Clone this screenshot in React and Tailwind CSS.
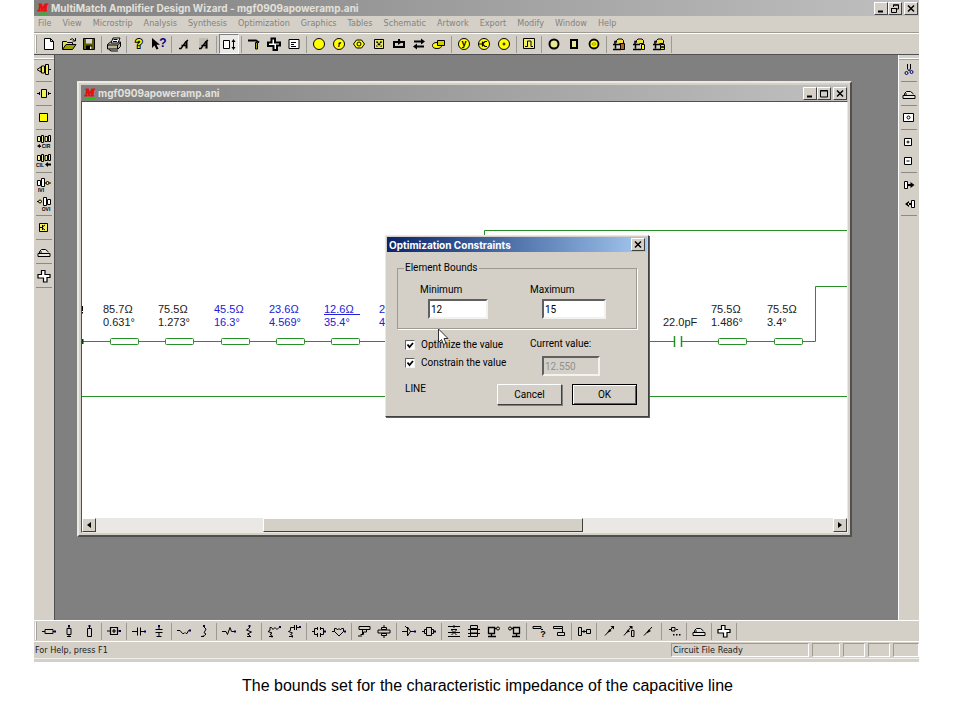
import { useState } from 'react';
import clsx from 'clsx';

const raised = 'border border-t-white border-l-white border-b-[#404040] border-r-[#404040] bg-[#d4d0c8]';
const sunken = 'border-2 border-t-[#606060] border-l-[#606060] border-b-[#f4f2ee] border-r-[#f4f2ee]';
const uiFont = "font-['DejaVu_Sans_Condensed','DejaVu_Sans',sans-serif]";
const titleFont = "font-[Inter,'DejaVu_Sans_Condensed',sans-serif] text-[10px] font-bold";

const menus = [
  'File', 'View', 'Microstrip', 'Analysis', 'Synthesis', 'Optimization', 'Graphics',
  'Tables', 'Schematic', 'Artwork', 'Export', 'Modify', 'Window', 'Help',
];

const YELLOW = '#ffff00';

const Glyph = ({ x = 10, y, size, children, ...rest }) => (
  <text x={x} y={y} fontSize={size} textAnchor="middle" stroke="none" fill="#000" fontWeight="bold" {...rest}>
    {children}
  </text>
);

const Disc = ({ children }) => (
  <>
    <circle cx="10" cy="10" r="5.5" fill={YELLOW} />
    {children}
  </>
);

const Board = ({ children }) => (
  <>
    <path d="M7.500 8.500v-2l1.500-1.500h4l1.500 1.500v3h-4" fill="#f0e040" />
    <path d="M4 10.500h7M6.500 10.500v4M4 15.500h8M8 7.500h-2v3" strokeWidth="1.500" />
    {children}
  </>
);

const crossPath = 'M7.500 4.500h3.500v4h5v3h-3v4.500h-3.500v-4h-5.500v-3.500h3.500z';
const bump = <path d="M4 14.500h12v-3h-12zM5.500 11v-1.500l2-2h4l3 2.500M6 10h2" fill="#e8e6e0" />;
const cross = <path d={crossPath} fill="#fff" strokeWidth="1.200" />;
const annotate = (
  <>
    <path d="M5 14.500h2l5-7M7.500 11.500h5M12 7.500l2-1.500" strokeWidth="1.300" />
    <path d="M12.500 7v7.500" strokeWidth="2" />
  </>
);

/* Main toolbar, grouped between separators */
const mainTools = [
  [
    { name: 'New', art: <path d="M5.500 4.500h6l3 3v8h-9zM11.500 4.500v3h3" fill="#fff" /> },
    {
      name: 'Open',
      art: (
        <>
          <path d="M3.500 15v-7.500h4l1 1h5v2.500" fill="#e8e060" />
          <path d="M3.500 15.500l3.500-5h10l-3.500 5z" fill="#a0a000" />
          <path d="M11 5.500q3-2 4.500 1M16.500 4v3h-3" />
        </>
      ),
    },
    {
      name: 'Save',
      art: (
        <>
          <path d="M4.500 4.500h11v11h-11z" fill="#606000" />
          <path d="M7 5h6v4.500h-6z" fill="#d8d8d0" stroke="none" />
          <path d="M7 11.500h6v4h-6z" fill="#000" stroke="none" />
          <path d="M11 12.500h1.500v2.500h-1.500z" fill="#fff" stroke="none" />
        </>
      ),
    },
  ],
  [
    {
      name: 'Print',
      art: (
        <>
          <path d="M3.500 10.500l3-2.500h10v4.500l-2.500 2.500h-10.500z" fill="#b8b4a8" />
          <path d="M7 9l2-5h7l-2 5z" fill="#fff" />
          <path d="M9.500 5.500h4M9 7.500h4M3.500 11h10l3-2.500M13.500 11v4M5 15.500l2 1.500h7" />
          <path d="M9.500 13h2" stroke="#c0c000" />
        </>
      ),
    },
  ],
  [
    {
      name: 'Help',
      art: (
        <Glyph y="14" size="12" fill={YELLOW} stroke="#000" strokeWidth="2" paintOrder="stroke">?</Glyph>
      ),
    },
    {
      name: 'Context help',
      art: (
        <>
          <path d="M3 4v10l2.500-2.500 2 4 2-.7-2-4h3.500z" fill="#000" stroke="none" />
          <Glyph x="14" y="13" size="12" fill="#000080">?</Glyph>
        </>
      ),
    },
  ],
  [
    { name: 'Annotate', art: annotate },
    {
      name: 'Annotate all',
      art: (
        <>
          <path d="M5 4h9v11h-9z" fill="#c0bcb4" stroke="none" />
          {annotate}
        </>
      ),
    },
  ],
  [
    {
      name: 'Resize',
      pressed: true,
      art: (
        <>
          <path d="M4.500 6.500h6v8h-6z" fill="#fff" />
          <path d="M14.500 6v9" />
          <path d="M12.500 8l2-3 2 3zM12.500 13l2 3 2-3z" fill="#000" stroke="none" />
        </>
      ),
    },
  ],
  [
    {
      name: 'Build',
      art: (
        <>
          <path d="M4 6.500h8l3 2" strokeWidth="1.800" />
          <path d="M11.500 8.500h2v6.500h-2z" fill="#a0a000" />
        </>
      ),
    },
    {
      name: 'Junction',
      art: <path d={crossPath} fill="#fff" strokeWidth="2" />,
    },
    {
      name: 'Properties',
      art: <path d="M5 5.500h10v9h-10zM7 8.500h5M7 10.500h3M7 12.500h5" fill="#fff" />,
    },
  ],
  [
    { name: 'Source', art: <Disc /> },
    { name: 'Frequency', art: <Disc><Glyph y="13" size="8" fontStyle="italic">f</Glyph></Disc> },
    {
      name: 'Target',
      art: (
        <>
          <path d="M4.500 10l3-4h5l3 4-3 4h-5z" fill={YELLOW} />
          <circle cx="10" cy="10" r="2" fill={YELLOW} />
        </>
      ),
    },
    {
      name: 'Matrix',
      art: (
        <>
          <path d="M5.500 5.500h9v9h-9z" fill="#e8e860" />
          <path d="M7.500 7.500l5 5M12.500 7.500l-5 5" strokeWidth="1.500" strokeDasharray="2 1" />
        </>
      ),
    },
    {
      name: 'Loop',
      art: (
        <>
          <path d="M5 8h10v5h-10zM10 5v4" fill="none" strokeWidth="2" />
          <path d="M9 5l4 3-4 3z" fill="#000" stroke="none" />
        </>
      ),
    },
    {
      name: 'Swap',
      art: (
        <>
          <path d="M5 7.500h9M6 12.500h9" strokeWidth="2" />
          <path d="M12 4.500l4 3-4 3zM8 9.500l-4 3 4 3z" fill="#000" stroke="none" />
        </>
      ),
    },
    {
      name: 'Layers',
      art: (
        <>
          <ellipse cx="8" cy="11.500" rx="4.500" ry="3" fill={YELLOW} />
          <path d="M8.500 6.500h7v5h-7z" fill="#d0d000" />
        </>
      ),
    },
  ],
  [
    { name: 'Y parameters', art: <Disc><Glyph y="12" size="9">y</Glyph></Disc> },
    { name: 'Transistor', art: <Disc><path d="M4 10h4M8.500 7.500v5M9 9.500l2-2h2M9 10.500l2 2h2" strokeWidth="1.200" /></Disc> },
    { name: 'Point', art: <Disc><path d="M8.500 10h3M10 8.500v3" /></Disc> },
  ],
  [
    {
      name: 'Pulse',
      art: (
        <>
          <path d="M4.500 4.500h11v10h-11z" fill="#f4f060" />
          <path d="M6 12.500h2.500v-5.500h3.500v5.500h2" />
        </>
      ),
    },
  ],
  [
    { name: 'Gain circles', art: <circle cx="10" cy="10" r="4.500" fill="#e8e890" strokeWidth="2" /> },
    { name: 'Mask', art: <path d="M7 6h6v8h-6z" fill="#e8e890" strokeWidth="2" /> },
    {
      name: 'Noise circles',
      art: (
        <>
          <circle cx="10" cy="10" r="4.500" fill={YELLOW} strokeWidth="1.800" />
          <ellipse cx="10" cy="10" rx="2" ry="1.200" strokeWidth=".8" stroke="#808000" />
        </>
      ),
    },
  ],
  [
    { name: 'Board copy', art: <Board><path d="M11.500 9.500h4v6h-4z" fill="#b06020" /></Board> },
    { name: 'Board edit', art: <Board><path d="M12.500 10.500h3v5h-3z" fill={YELLOW} /></Board> },
    { name: 'Board stack', art: <Board><path d="M11.500 10.500h4v2.500h-4zM11.500 13h4v2.500h-4z" fill="#d8e020" /></Board> },
  ],
];

const pins = (...points) => points.map(([x, y]) => (
  <path key={`${x}-${y}`} d={`M${x - 1} ${y - 1}h2v2h-2z`} fill="#000060" stroke="none" />
));

/* Element palette along the bottom */
const elementTools = [
  [
    { name: 'Series line', art: <><path d="M3 10.500h3M14 10.500h3M6 8.500h8v4h-8z" />{pins([16, 10.5])}</> },
    { name: 'Shorted stub', art: <><path d="M10 4v3M10 13v3M8 7.500h4v6h-4zM8 15.500h4" />{pins([10, 5])}</> },
    { name: 'Open stub', art: <><path d="M10.500 4v3M8.500 7.500h4v8h-4z" />{pins([10.5, 5])}</> },
  ],
  [
    { name: 'Block', art: <><path d="M3 10h3M14 10h3M6.500 6.500h7v7h-7zM8 10h4M10 8v4" strokeWidth="1.200" />{pins([16, 10])}</> },
  ],
  [
    { name: 'Series capacitor', art: <><path d="M3 10.500h5M12 10.500h4M8.500 6.500v8M11.500 6.500v8" />{pins([16, 10.5])}</> },
    { name: 'Shunt capacitor', art: <><path d="M10 4v4M6.500 8.500h7M6.500 11.500h7M10 12v4M7.500 15.500h5" />{pins([10, 5])}</> },
  ],
  [
    { name: 'Series inductor', art: <><path d="M3 9.500h3l2.500 3h1.500l1-1 1 1h1l1.500-3h2" />{pins([16, 9.5])}</> },
    { name: 'Shunt inductor', art: <><path d="M10 4v2q3.500 2 1 4t1 3q-1 2-4 2.500M7 15.500h3" />{pins([10, 5])}</> },
  ],
  [
    { name: 'Series resistor', art: <><path d="M3 10.500h4l1.500 3 2.500-7 1.500 4h4" />{pins([16, 10.5])}</> },
    { name: 'Shunt resistor', art: <><path d="M10.500 4v3l-3 2 5 2-4 2 2 1v2M8 15.500h4" />{pins([10.5, 5])}</> },
  ],
  [
    { name: 'Shunt RL', art: <><path d="M16 6.500h-1l-2 2-2-2-2 2-1.500-2h-1.500v3l-2 1 4 1.500-2 1.500 2 1v2M5 15.500h4" />{pins([16, 6])}</> },
    { name: 'Shunt RC', art: <><path d="M16 6.500h-3M12.500 4v5M10.500 4v5M10.500 6.500h-4v3l-2 1 4 1.500-2 1.500 2 1v2M5 15.500h4" />{pins([16, 6])}</> },
  ],
  [
    { name: 'Parallel RLC', art: <><path d="M3 10.500h2.500M14.500 10.500h2M8.500 6v3M11.500 6v3M8.500 12v4M11.500 12v4M8.500 7.500h-3v6h3M11.500 7.500h3v6h-3" />{pins([16, 10.5])}</> },
    { name: 'Parallel LC', art: <><path d="M3 10.500h2.500M14.500 10.500h2M5.500 10.500v-3h2l1 1.500 1.500-1.500 1.500 1.500 1-1.500h2v3l-4.500 4.500z" />{pins([16, 10.5])}</> },
  ],
  [
    { name: 'Coupled line', art: <path d="M5 5.500h11v3h-11zM8.500 9v4M6.500 13.500h3v-2.500h3v-2M4 15h4" /> },
    { name: 'Coupler', art: <path d="M10 4v2M7.500 6.500h5v2h-5zM4 9h12v3h-12zM7.500 12.500h5v2h-5zM10 15v2" /> },
  ],
  [
    { name: 'Amplifier', art: <><path d="M3 10.500h5M8.500 6v9l3-4.500zM11 10.500h5M8 7l-2-2" />{pins([16, 10.5])}</> },
    { name: 'Two port', art: <><path d="M3 10.500h3M14 10.500h2M5.500 8.500h2v4h-2zM7.500 6.500h5v8h-5zM12.500 8.500h2v4h-2z" />{pins([16, 10.5])}</> },
  ],
  [
    { name: 'Tee network', art: <path d="M4 5.500h12M10 4v3M7 8.500h6M4 11.500h12M7.500 9l5 5M12.500 9l-5 5M4 15.500h12" /> },
    { name: 'Pi network', art: <path d="M6.500 4.500h7v3h-7zM4 8.500h12M6.500 9v3h7v-3M4 12.500h12M6.500 13v2.500h7v-2.500M4 15.500h2" /> },
    { name: 'Load right', art: <><path d="M4.500 6.500h6v6h-6zM10.500 7.500h2M4 15.500h8M7.500 13v2" strokeWidth="1.300" /><circle cx="14" cy="7.500" r="1.500" /></> },
    { name: 'Load left', art: <><path d="M9.500 6.500h6v6h-6zM7.500 7.500h2M8 15.500h8M12.500 13v2" strokeWidth="1.300" /><circle cx="6" cy="7.500" r="1.500" /></> },
  ],
  [
    { name: 'Identify', art: <><path d="M4 5.500h8v2h-8zM12 8.500h2" /><Glyph x="14" y="16" size="9">?</Glyph></> },
    { name: 'Stack', art: <path d="M4.500 5.500h9v2h-9zM8.500 11.500h7v3h-7zM13.500 8v3" /> },
  ],
  [
    { name: 'Replace', art: <path d="M4.500 6.500h3v8h-3zM8 10.500h4M12.500 8.500h4v4h-4zM10 9v3" /> },
  ],
  [
    { name: 'Tune up', art: <><path d="M6 14.500l8-8.500" /><path d="M11.500 5h3.500v3.500zM8 12l2.500-4 2 2z" fill="#000" stroke="none" /></> },
    { name: 'Tune element', art: <><path d="M5 14.500l7-8.500M12.500 9.500h2.500v6h-2.500z" /><path d="M10 5h3.500v3.500zM7 12l2-3.500 2 2z" fill="#000" stroke="none" /></> },
    { name: 'Tune down', art: <><path d="M5 14.500l8-8.500" /><path d="M7.500 12.500l2-4 2.500 1.500z" fill="#000" stroke="none" /></> },
  ],
  [
    { name: 'More', art: <><path d="M5 8.500h2M12 8.500h2M7.500 6.500h3.500v3.500h-3.500z" /><path d="M9 13h1.500v1.500h-1.500zM12 13h1.500v1.500h-1.500zM15 13h1.500v1.500h-1.500z" fill="#000" stroke="none" /></> },
  ],
  [{ name: 'Undo', art: bump }],
  [{ name: 'Artwork', art: cross }],
];

const leftTools = [
  [{ name: 'Input match', art: <path d="M3 9.500l4-2.500v5zM7.500 6h3v7h-3zM11.500 4.500h3v10h-3zM15 9.500h2" fill="#f4f060" /> }],
  [{ name: 'Interstage', art: <path d="M3 9.500h3M14 9.500h3M7.500 5.500h5v8h-5zM5.500 8v3M14.500 8v3" fill="#f4f060" /> }],
  [{ name: 'Output match', art: <path d="M5.500 5.500h8v8h-8z" fill={YELLOW} /> }],
  [
    {
      name: 'To CIR',
      art: (
        <>
          <path d="M3.500 4.500h3v5h-3zM7.500 3.500h2v7h-2zM11 4.500h2.500v5h-2.500zM14.500 3.500h2v6h-2z" fill="#f4f4a0" />
          <path d="M3 14l3-2v4zM5 13.500h2v1.500h-2z" fill="#000" stroke="none" />
          <Glyph x="12" y="16" size="5">CIR</Glyph>
        </>
      ),
    },
    {
      name: 'From CIL',
      art: (
        <>
          <path d="M3.500 4.500h3v5h-3zM7.500 3.500h2v7h-2zM11 4.500h2.500v5h-2.500zM14.500 3.500h2v6h-2z" fill="#f4f4a0" />
          <path d="M11 13.500l3-2.500v1.500h3v2h-3v1.500z" fill="#000" stroke="none" />
          <Glyph x="6" y="16" size="5">CIL</Glyph>
        </>
      ),
    },
  ],
  [
    {
      name: 'Input VI',
      art: (
        <>
          <path d="M3.500 5.500h3v5h-3zM7.500 3.500h3v8h-3zM11 8h6" fill="#fff" />
          <circle cx="13.500" cy="8" r="1.500" fill={YELLOW} />
          <Glyph x="7" y="17" size="5">IVI</Glyph>
        </>
      ),
    },
    {
      name: 'Output VI',
      art: (
        <>
          <path d="M3 7.500h5M9.500 3.500h3v8h-3zM13.500 5.500h3v5h-3z" fill="#fff" />
          <circle cx="6" cy="7.500" r="1.500" fill={YELLOW} />
          <Glyph x="12" y="17" size="5">OVI</Glyph>
        </>
      ),
    },
  ],
  [
    {
      name: 'Device',
      art: (
        <>
          <path d="M5.500 5.500h8v8h-8z" fill="#f4f060" />
          <path d="M6 9.500h2M8.500 7v5M9 8.500l2-1.500M9 10.500l2 1.500" />
        </>
      ),
    },
  ],
  [{ name: 'Undo', art: bump }],
  [{ name: 'Artwork', art: cross }],
];

const rightTools = [
  [
    {
      name: 'Cut',
      art: (
        <>
          <path d="M8.500 4v5l2 2M11.500 4v5l-2 2" />
          <g stroke="#000080"><circle cx="7.500" cy="13" r="1.500" /><circle cx="12.500" cy="12" r="1.500" /></g>
        </>
      ),
    },
  ],
  [{ name: 'Undo', art: bump }],
  [{ name: 'Zoom window', art: <><path d="M4.500 5.500h10v8h-10z" fill="#fff" /><circle cx="9.500" cy="9.500" r="1.500" /></> }],
  [
    { name: 'Zoom in', art: <path d="M5.500 6.500h7v7h-7zM7.500 10h3M9 8.500v3" fill="#fff" /> },
    { name: 'Zoom out', art: <path d="M5.500 6.500h7v7h-7zM7.500 10h3" fill="#fff" /> },
  ],
  [
    { name: 'Next', art: <><path d="M5.500 6.500h3v7h-3zM9 10h4" fill="#fff" /><path d="M11.500 7l4 3-4 3zM9 9h3v2h-3z" fill="#000" stroke="none" /></> },
    { name: 'Previous', art: <><path d="M12.500 6.500h3v7h-3z" fill="#fff" /><path d="M10 7l-4 3 4 3zM9 9h3v2h-3z" fill="#000" stroke="none" /></> },
  ],
];

const ToolButton = ({ tool, vertical }) => (
  <button
    title={tool.name}
    aria-label={tool.name}
    className={clsx(
      'flex shrink-0 items-center justify-center w-5',
      vertical ? 'h-[19px]' : 'h-5',
      tool.pressed && 'border border-[#808080] border-b-white border-r-white bg-[#ebe9e5]',
    )}
  >
    <svg
      viewBox={vertical ? '0 0 20 19' : '0 0 20 20'}
      className={clsx('w-5 shrink-0 font-[Liberation_Sans,sans-serif]', vertical ? 'h-[19px]' : 'h-5')}
      fill="none"
      stroke="#000"
    >
      {tool.art}
    </svg>
  </button>
);

const Toolbar = ({ groups, label }) => (
  <div role="toolbar" aria-label={label} className="flex h-[21px] items-center border-t border-t-white pl-px">
    <span className="mr-0.5 h-[18px] w-0.5 border-l border-l-white bg-[#a0a0a0]" />
    {groups.map((group, i) => (
      <div key={i} className="flex items-center">
        {group.map((tool) => <ToolButton key={tool.name} tool={tool} />)}
        <span className="mx-0.5 h-[17px] w-px bg-[#9c9a94]" />
      </div>
    ))}
  </div>
);

const SideToolbar = ({ groups, label }) => (
  <div role="toolbar" aria-label={label} className="flex flex-col items-center pt-[3px]">
    <span className="h-0.5 w-full border-t border-t-white bg-[#a0a0a0]" />
    {groups.map((group, i) => (
      <div key={i} className="flex flex-col items-center">
        {group.map((tool) => <ToolButton key={tool.name} tool={tool} vertical />)}
        <span className="my-0.5 h-px w-4 bg-[#8c8a84]" />
      </div>
    ))}
  </div>
);

const Logo = () => (
  <svg viewBox="0 0 14 14" className="h-3.5 w-3.5 shrink-0 font-[Liberation_Serif,serif]">
    <path d="M2 13q4-3 10-1v1.500h-10z" fill="#20c020" />
    <text x="7" y="10" fontSize="11" fontWeight="bold" fontStyle="italic" textAnchor="middle" fill="#e81010" stroke="#e81010">M</text>
  </svg>
);

const captionArt = {
  Minimize: <path d="M3 8.500h5" strokeWidth="2" />,
  Maximize: <path d="M2.500 2.500h7v6.500h-7zM2 3h8" />,
  Restore: <path d="M4.500 4v-2h5v4h-2M4 2h6M2.500 5.500h5v4h-5zM2 5.500h6" />,
  Close: <path d="M3 2.500l6 6M9 2.500l-6 6" strokeWidth="1.500" />,
};

const CaptionButton = ({ kind }) => (
  <button aria-label={kind} className={clsx(raised, 'flex h-[13px] w-3.5 items-center justify-center')}>
    <svg viewBox="0 0 12 11" className="h-[11px] w-3 shrink-0" fill="none" stroke="#000">{captionArt[kind]}</svg>
  </button>
);

const TitleBar = ({ title, middle }) => (
  <header className="flex h-4 items-center bg-linear-to-r from-[#808080] to-[#c0c0c0] pl-0.5 pr-px">
    <Logo />
    <h1 className={clsx(titleFont, 'flex-1 truncate pl-px leading-[14px] text-[#e4e1da]')}>{title}</h1>
    <div className="flex">
      <CaptionButton kind="Minimize" />
      <CaptionButton kind={middle} />
      <span className="w-0.5" />
      <CaptionButton kind="Close" />
    </div>
  </header>
);

/* Circuit elements, positions in schematic coordinates */
const lines = [
  { x: 28, z: '85.7Ω', deg: '0.631°' },
  { x: 83, z: '75.5Ω', deg: '1.273°' },
  { x: 139, z: '45.5Ω', deg: '16.3°', optimized: true },
  { x: 194, z: '23.6Ω', deg: '4.569°', optimized: true },
  { x: 249, z: '12.6Ω', deg: '35.4°', optimized: true, selected: true },
  { x: 304, z: '23.6Ω', deg: '4.569°', optimized: true },
  { x: 636, z: '75.5Ω', deg: '1.486°' },
  { x: 692, z: '75.5Ω', deg: '3.4°' },
];

const Schematic = () => (
  <div className="relative min-h-0 flex-1 overflow-hidden bg-white font-[Liberation_Sans,Arial,sans-serif] text-[11px] leading-[14px]">
    <svg className="absolute inset-0 h-full w-full" fill="none" stroke="#289028">
      <path d="M402.500 239v-110.500h2000M0 294.500h2000M0 239.500h592M599 239.500h134.500v-55h2000" />
      <path d="M592.500 234v11M599.500 234v11" strokeWidth="1.500" />
      <path d="M.5 237v5" stroke="#004000" strokeWidth="2" />
      <path d="M.5 204v5M.5 210v1.500" stroke="#000" />
      {lines.map(({ x }) => (
        <rect key={x} x={x + 0.5} y="236.500" width="28" height="6" rx="1" fill="#fff" />
      ))}
    </svg>
    {lines.map(({ x, z, deg, optimized, selected }) => (
      <div
        key={x}
        className={clsx('absolute top-[200px] w-9', optimized ? 'text-[#2020d8]' : 'text-[#202020]')}
        style={{ left: x - 7 }}
      >
        <div className={clsx('h-[13px]', selected && 'border-b border-[#2020d8]')}>{z}</div>
        <div>{deg}</div>
      </div>
    ))}
    <div className="absolute left-[581px] top-[213px] text-[#202020]">22.0pF</div>
  </div>
);

const ScrollBar = () => (
  <div className="flex h-3.5 bg-[#eae8e4]">
    <button aria-label="Scroll left" className={clsx(raised, 'flex w-3.5 items-center justify-center')}>
      <svg viewBox="0 0 4 6" className="h-1.5 w-1"><path d="M4 0v6L0 3z" /></svg>
    </button>
    <div className="flex flex-1">
      <div className={clsx(raised, 'ml-[167px] w-80')} />
    </div>
    <button aria-label="Scroll right" className={clsx(raised, 'flex w-3.5 items-center justify-center')}>
      <svg viewBox="0 0 4 6" className="h-1.5 w-1"><path d="M0 0v6l4-3z" /></svg>
    </button>
  </div>
);

const CircuitWindow = () => (
  <section className="flex flex-1 flex-col border-2 border-t-[#ece9e2] border-l-[#ece9e2] border-b-[#505050] border-r-[#505050] bg-[#d4d0c8] p-0.5">
    <TitleBar title="mgf0909apoweramp.ani" middle="Maximize" />
    <div className="flex flex-1 flex-col border border-t-[#505050] border-l-[#505050] border-b-[#ece9e2] border-r-[#ece9e2]">
      <Schematic />
      <ScrollBar />
    </div>
  </section>
);

const CheckRow = ({ label, checked, onChange }) => (
  <label className="flex h-[18px] items-center gap-1.5">
    <span className="grid">
      <input
        type="checkbox"
        checked={checked}
        onChange={(e) => onChange(e.target.checked)}
        className="peer col-start-1 row-start-1 h-2.5 w-2.5 appearance-none border border-t-[#606060] border-l-[#606060] border-b-[#f4f2ee] border-r-[#f4f2ee] bg-white"
      />
      <svg viewBox="0 0 10 10" className="pointer-events-none invisible col-start-1 row-start-1 h-2.5 w-2.5 peer-checked:visible" fill="none" stroke="#000" strokeWidth="1.800">
        <path d="M2.500 4.500l2 2.500 3.500-4" />
      </svg>
    </span>
    {label}
  </label>
);

const ConstraintsDialog = () => {
  const [min, setMin] = useState('12');
  const [max, setMax] = useState('15');
  const [optimize, setOptimize] = useState(true);
  const [constrain, setConstrain] = useState(true);

  return (
    <div
      role="dialog"
      aria-labelledby="dialog-title"
      className="absolute left-[330px] top-[180px] w-[264px] border border-t-[#ece9e2] border-l-[#ece9e2] border-b-[#404040] border-r-[#404040] bg-[#d4d0c8] p-px font-[Roboto,'Liberation_Sans',sans-serif] text-[10px] leading-3 text-black shadow-[1px_1px_0_#606060]"
    >
      <header className="flex h-[15px] items-center justify-between bg-linear-to-r from-[#0a246a] to-[#a6caf0] px-0.5">
        <h2 id="dialog-title" className={clsx(titleFont, 'text-white')}>Optimization Constraints</h2>
        <CaptionButton kind="Close" />
      </header>

      <form className="px-2.5 pb-2.5 pt-2.5" onSubmit={(e) => e.preventDefault()}>
        <fieldset className="grid h-[67px] grid-cols-[110px_1fr] border border-[#9c9a94] pl-[22px] pt-2.5 shadow-[1px_1px_0_#fff]">
          <legend className="-ml-4 px-px">Element Bounds</legend>
          <label className="flex flex-col gap-[3px]">
            Minimum
            <input value={min} onChange={(e) => setMin(e.target.value)} className={clsx(sunken, 'ml-2 h-5 w-[60px] bg-white px-px')} />
          </label>
          <label className="flex flex-col gap-[3px]">
            Maximum
            <input value={max} onChange={(e) => setMax(e.target.value)} className={clsx(sunken, 'ml-3 h-5 w-16 bg-white px-px')} />
          </label>
        </fieldset>

        <div className="flex pl-2 pt-[7px]">
          <div className="w-[125px]">
            <CheckRow label="Optimize the value" checked={optimize} onChange={setOptimize} />
            <CheckRow label="Constrain the value" checked={constrain} onChange={setConstrain} />
          </div>
          <label className="flex flex-col gap-1.5 pt-0.5">
            Current value:
            <input disabled defaultValue="12.550" className={clsx(sunken, 'ml-3 h-5 w-[58px] px-px text-[#909090]')} />
          </label>
        </div>

        <div className="flex items-start pl-2 pt-2">
          <span className="flex-1 leading-[10px]">LINE</span>
          <div className="flex gap-2.5">
            <button type="button" className={clsx(raised, 'h-[21px] w-[65px] shadow-[1px_1px_0_#808080]')}>Cancel</button>
            <button type="submit" className="h-[21px] w-[65px] border border-black bg-[#d4d0c8] shadow-[inset_1px_1px_0_#fff,inset_-1px_-1px_0_#606060]">OK</button>
          </div>
        </div>
      </form>

      <svg viewBox="0 0 12 19" className="pointer-events-none absolute left-[51px] top-[92px] h-[19px] w-3" fill="#fff" stroke="#303030">
        <path d="M1.500 1v13.500l3-3 2 5 2.500-1-2-5h4z" />
      </svg>
    </div>
  );
};

const StatusBar = () => (
  <footer className="flex h-[21px] items-start gap-[3px] border-t border-t-white pt-px pb-1 text-[9px] leading-[14px] text-[#202020] shadow-[inset_0_-3px_0_#d4d0c8,inset_0_-4px_0_#f0eee8]">
    <span className="flex-1 pl-px">For Help, press F1</span>
    <span className="h-3.5 w-[138px] border border-[#9c9a94] border-b-white border-r-white pl-px leading-3">Circuit File Ready</span>
    <span className="h-3.5 w-7 border border-[#9c9a94] border-b-white border-r-white" />
    <span className="h-3.5 w-[22px] border border-[#9c9a94] border-b-white border-r-white" />
    <span className="h-3.5 w-[22px] border border-[#9c9a94] border-b-white border-r-white" />
    <span className="h-3.5 w-[26px] border border-[#9c9a94] border-b-white border-r-white" />
  </footer>
);

export default function App() {
  return (
    <main className="flex min-h-screen flex-col bg-white pl-[34px] pr-[41px]">
      <div className={clsx(uiFont, 'flex flex-1 flex-col bg-[#d4d0c8]')}>
        <TitleBar title="MultiMatch Amplifier Design Wizard - mgf0909apoweramp.ani" middle="Restore" />
        <nav className="flex h-[17px] items-center gap-[11px] border-b border-b-[#9c9a94] pl-1 text-[9px] text-[#84827c]">
          {menus.map((menu) => <button key={menu}>{menu}</button>)}
        </nav>
        <Toolbar groups={mainTools} label="Main tools" />

        <div className="flex flex-1 border-t border-t-[#505050]">
          <aside className="w-[21px] border-r border-r-[#505050]">
            <SideToolbar groups={leftTools} label="Synthesis tools" />
          </aside>
          <div className="relative flex flex-1 bg-[#808080] pb-[83px] pl-[22px] pr-[46px] pt-[26px]">
            <CircuitWindow />
            <ConstraintsDialog />
          </div>
          <aside className="w-[21px] border-l border-l-white">
            <SideToolbar groups={rightTools} label="View tools" />
          </aside>
        </div>

        <Toolbar groups={elementTools} label="Circuit elements" />
        <StatusBar />
      </div>
      <p className="h-[58px] pl-[22px] pt-3 text-center font-[Liberation_Sans,Arial,sans-serif] text-base text-black">
        The bounds set for the characteristic impedance of the capacitive line
      </p>
    </main>
  );
}
